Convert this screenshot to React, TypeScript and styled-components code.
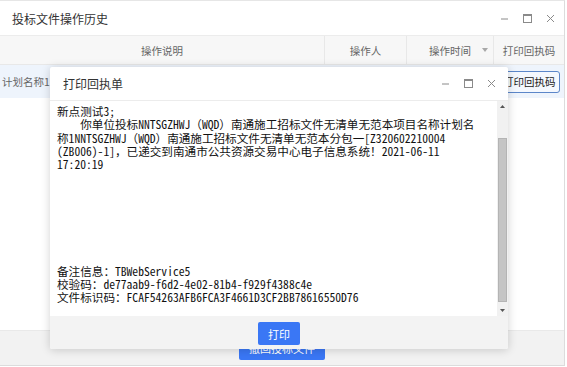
import React from "react";
import styled, { createGlobalStyle } from "styled-components";

const GlobalStyle = createGlobalStyle`
    html, body {
        margin: 0;
        padding: 0;
        background: #ffffff;
        overflow: hidden;
    }
    body {
        font-family: "Noto Sans CJK SC", "Noto Sans", sans-serif;
    }
`;

const columns = [
    { key: "desc", label: "操作说明", width: 325 },
    { key: "user", label: "操作人", width: 82 },
    { key: "time", label: "操作时间", width: 87, sort: true },
    { key: "print", label: "打印回执码", width: 70 },
];

const receiptLines = [
    "新点测试3;",
    "    你单位投标NNTSGZHWJ（WQD）南通施工招标文件无清单无范本项目名称计划名",
    "称1NNTSGZHWJ（WQD）南通施工招标文件无清单无范本分包一[Z320602210004",
    "(ZB006)-1]，已递交到南通市公共资源交易中心电子信息系统！2021-06-11",
    "17:20:19",
    "",
    "",
    "",
    "",
    "",
    "",
    "",
    "备注信息：TBWebService5",
    "校验码：de77aab9-f6d2-4e02-81b4-f929f4388c4e",
    "文件标识码：FCAF54263AFB6FCA3F4661D3CF2BB78616550D76",
];

const WindowIcons = ({ gap }: { gap: number }) => (
    <IconGroup $gap={gap}>
        <svg width="9" height="9" viewBox="0 0 9 9">
            <path d="M1 5h7" stroke="#8a8a8a" strokeWidth="1" />
        </svg>
        <svg width="9" height="9" viewBox="0 0 9 9">
            <rect x="0.5" y="0.5" width="8" height="8" fill="none" stroke="#8a8a8a" />
            <path d="M0.5 1.5h8" stroke="#8a8a8a" strokeWidth="1" />
        </svg>
        <svg width="9" height="9" viewBox="0 0 9 9">
            <path d="M1 1l7 7M8 1l-7 7" stroke="#8a8a8a" strokeWidth="1" />
        </svg>
    </IconGroup>
);

export const App = () => {
    return (
        <>
            <GlobalStyle />
            <Screen>
                <OuterWindow>
                    <OuterTitleBar>
                        <OuterTitle>投标文件操作历史</OuterTitle>
                        <WindowIcons gap={14} />
                    </OuterTitleBar>
                    <GridArea>
                        <HeaderRow>
                            {columns.map((c) => (
                                <HeaderCell key={c.key} $width={c.width}>
                                    {c.label}
                                    {c.sort && <SortArrow />}
                                </HeaderCell>
                            ))}
                        </HeaderRow>
                        <DataRow>
                            <DataCell $width={325}>计划名称1</DataCell>
                            <DataCell $width={82} />
                            <DataCell $width={87} />
                            <DataCell $width={70}>
                                <RowButton>打印回执码</RowButton>
                            </DataCell>
                        </DataRow>
                    </GridArea>
                    <OuterFooter>
                        <PrimaryButton>撤回投标文件</PrimaryButton>
                    </OuterFooter>
                </OuterWindow>

                <Dialog>
                    <DialogTitleBar>
                        <DialogTitle>打印回执单</DialogTitle>
                        <WindowIcons gap={14} />
                    </DialogTitleBar>
                    <DialogBody>
                        <ReceiptText>
                            {receiptLines.map((line, i) => (
                                <ReceiptLine key={i}>{line || "\u00a0"}</ReceiptLine>
                            ))}
                        </ReceiptText>
                        <ScrollBar>
                            <ScrollArrow>
                                <svg width="5" height="3" viewBox="0 0 5 3">
                                    <path d="M0 3h5L2.5 0z" fill="#555" />
                                </svg>
                            </ScrollArrow>
                            <ScrollTrack>
                                <ScrollThumb />
                            </ScrollTrack>
                            <ScrollArrow>
                                <svg width="5" height="3" viewBox="0 0 5 3">
                                    <path d="M0 0h5L2.5 3z" fill="#555" />
                                </svg>
                            </ScrollArrow>
                        </ScrollBar>
                    </DialogBody>
                    <DialogFooter>
                        <PrimaryButton>打印</PrimaryButton>
                    </DialogFooter>
                </Dialog>
            </Screen>
        </>
    );
};

export default App;

const Screen = styled.div`
    position: relative;
    width: 567px;
    height: 367px;
    overflow: hidden;
`;

const OuterWindow = styled.div`
    width: 565px;
    height: 366px;
    border: 1px solid #dcdcdc;
    border-left: none;
    border-top-color: #e6e6e6;
    box-sizing: border-box;
    display: flex;
    flex-direction: column;
    background: #fff;
`;

const OuterTitleBar = styled.div`
    height: 34px;
    flex: none;
    display: flex;
    align-items: center;
    justify-content: space-between;
    padding: 0 9px 0 12px;
    border-bottom: 1px solid #ececec;
`;

const OuterTitle = styled.span`
    font-size: 12px;
    color: #333;
`;

const IconGroup = styled.div<{ $gap: number }>`
    display: flex;
    align-items: center;
    gap: ${(p) => p.$gap}px;
`;

const GridArea = styled.div`
    flex: 1;
    display: flex;
    flex-direction: column;
`;

const HeaderRow = styled.div`
    display: flex;
    height: 28px;
    background: #f7f7f7;
    border-bottom: 1px solid #e8e8e8;
`;

const HeaderCell = styled.div<{ $width: number }>`
    position: relative;
    width: ${(p) => p.$width}px;
    flex: none;
    display: flex;
    align-items: center;
    justify-content: center;
    font-size: 10.5px;
    color: #666;
    border-right: 1px solid #e8e8e8;
    box-sizing: border-box;
    &:last-child {
        border-right: none;
    }
`;

const SortArrow = styled.span`
    position: absolute;
    right: 5px;
    top: 12px;
    width: 0;
    height: 0;
    border-left: 3.5px solid transparent;
    border-right: 3.5px solid transparent;
    border-top: 4px solid #a8a8a8;
`;

const DataRow = styled.div`
    display: flex;
    height: 33px;
    background: #eef4fc;
`;

const DataCell = styled.div<{ $width: number }>`
    width: ${(p) => p.$width}px;
    flex: none;
    display: flex;
    align-items: center;
    padding-left: 2px;
    font-size: 10.5px;
    color: #666;
    box-sizing: border-box;
`;

const RowButton = styled.button`
    height: 22px;
    padding: 0 3px 0 6px;
    border: 1px solid #5b86c9;
    border-radius: 3px;
    background: #f4f8fe;
    font-family: "Noto Sans CJK SC", sans-serif;
    font-size: 10.5px;
    color: #222;
    white-space: nowrap;
`;

const OuterFooter = styled.div`
    height: 34px;
    flex: none;
    display: flex;
    align-items: center;
    justify-content: center;
    background: #f2f2f2;
    border-top: 1px solid #e9e9e9;
`;

const PrimaryButton = styled.button`
    height: 23px;
    padding: 0 10px;
    border: none;
    border-radius: 2px;
    background: #3a77f5;
    color: #fff;
    font-family: "Noto Sans CJK SC", sans-serif;
    font-size: 11px;
`;

const Dialog = styled.div`
    position: absolute;
    left: 50px;
    top: 67px;
    width: 458px;
    height: 282px;
    background: #fff;
    box-shadow: 0 1px 10px rgba(0, 0, 0, 0.18);
    border-radius: 2px;
    display: flex;
    flex-direction: column;
    overflow: hidden;
`;

const DialogTitleBar = styled.div`
    height: 33px;
    flex: none;
    display: flex;
    align-items: center;
    justify-content: space-between;
    padding: 0 12px 0 13px;
    border-bottom: 1px solid #ececec;
`;

const DialogTitle = styled.span`
    font-size: 12px;
    color: #333;
`;

const DialogBody = styled.div`
    flex: 1;
    display: flex;
    min-height: 0;
`;

const ReceiptText = styled.div`
    flex: 1;
    padding: 4px 0 0 7px;
    font-family: "Noto Sans Mono CJK SC", "Noto Sans CJK SC", monospace;
    font-size: 11.6px;
    line-height: 13.3px;
    color: #111;
    overflow: hidden;
`;

const ReceiptLine = styled.div`
    white-space: pre;
`;

const ScrollBar = styled.div`
    width: 11px;
    flex: none;
    display: flex;
    flex-direction: column;
    background: #f1f1f1;
`;

const ScrollArrow = styled.div`
    height: 11px;
    flex: none;
    display: flex;
    align-items: center;
    justify-content: center;
`;

const ScrollTrack = styled.div`
    flex: 1;
    display: flex;
    flex-direction: column;
    justify-content: flex-end;
    padding-bottom: 3px;
`;

const ScrollThumb = styled.div`
    height: 164px;
    margin: 0 1px;
    background: #c5c5c5;
    border: 1px solid #b4b4b4;
    box-sizing: border-box;
`;

const DialogFooter = styled.div`
    height: 33px;
    flex: none;
    display: flex;
    justify-content: center;
    padding-top: 6px;
    box-sizing: border-box;
    background: #f3f3f3;
`;
